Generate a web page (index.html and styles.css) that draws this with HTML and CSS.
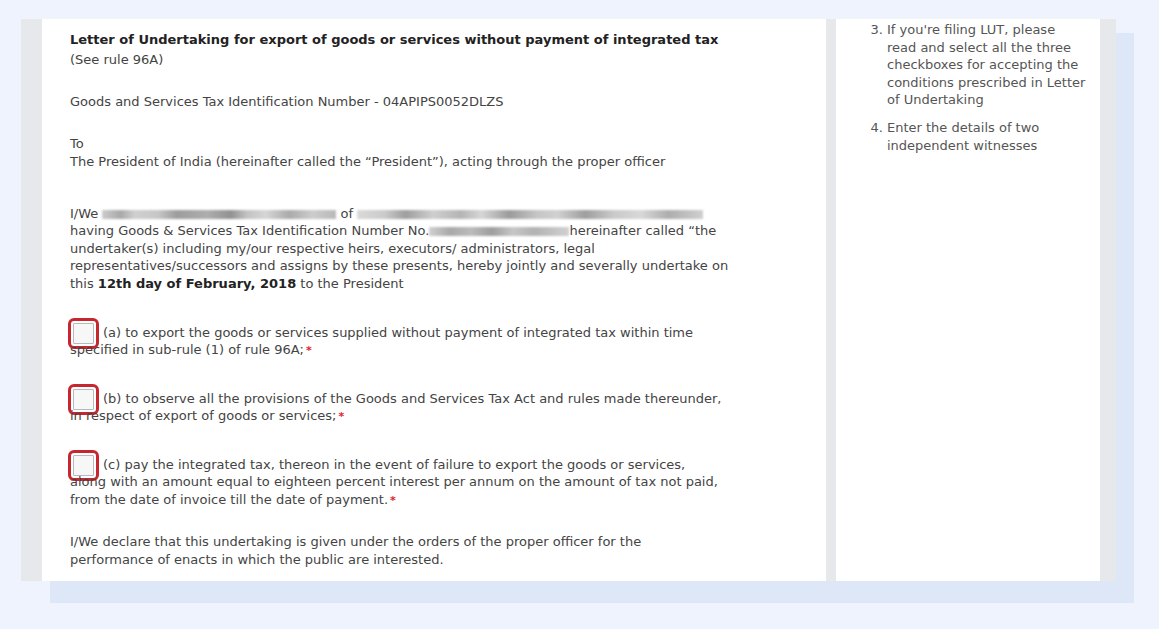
FILE: index.html
```html
<!DOCTYPE html>
<html lang="en">
<head>
<meta charset="utf-8">
<title>Letter of Undertaking</title>
<link rel="stylesheet" href="styles.css">
</head>
<body>
<div class="stage">
  <div class="frame">
    <div class="doc">
      <p class="title">Letter of Undertaking for export of goods or services without payment of integrated tax</p>
      <p>(See rule 96A)</p>
      <p class="gap-s">Goods and Services Tax Identification Number - 04APIPS0052DLZS</p>
      <p class="gap-s">To<br>The President of India (hereinafter called the &#8220;President&#8221;), acting through the proper officer</p>
      <p class="gap-l">I/We <span class="redact r1"></span> of <span class="redact r2"></span><br>having Goods &amp; Services Tax Identification Number No.<span class="redact r3"></span>hereinafter called &#8220;the<br>undertaker(s) including my/our respective heirs, executors/ administrators, legal<br>representatives/successors and assigns by these presents, hereby jointly and severally undertake on<br>this <b>12th day of February, 2018</b> to the President</p>
      <p class="gap-m"><span class="check"></span>(a) to export the goods or services supplied without payment of integrated tax within time<br>specified in sub-rule (1) of rule 96A;<span class="req">*</span></p>
      <p class="gap-n"><span class="check"></span>(b) to observe all the provisions of the Goods and Services Tax Act and rules made thereunder,<br>in respect of export of goods or services;<span class="req">*</span></p>
      <p class="gap-n"><span class="check"></span>(c) pay the integrated tax, thereon in the event of failure to export the goods or services,<br>along with an amount equal to eighteen percent interest per annum on the amount of tax not paid,<br>from the date of invoice till the date of payment.<span class="req">*</span></p>
      <p class="gap-e">I/We declare that this undertaking is given under the orders of the proper officer for the<br>performance of enacts in which the public are interested.</p>
    </div>
    <div class="side">
      <ol class="steps" start="3">
        <li>If you're filing LUT, please<br>read and select all the three<br>checkboxes for accepting the<br>conditions prescribed in Letter<br>of Undertaking</li>
        <li>Enter the details of two<br>independent witnesses</li>
      </ol>
    </div>
  </div>
</div>
</body>
</html>
```

FILE: styles.css
```css
html, body {
  margin: 0;
  padding: 0;
}
body {
  background: #eef3fd;
  width: 1159px;
  height: 629px;
  overflow: hidden;
  font-family: "DejaVu Sans", Verdana, sans-serif;
  font-size: 13px;
  line-height: 17.5px;
  color: #444;
}
.stage {
  position: relative;
  padding: 18px 0 0 21px;
}
.stage::before {
  content: "";
  position: absolute;
  left: 50px;
  top: 33px;
  width: 1084px;
  height: 570px;
  background: #dee7f7;
}
.frame {
  position: relative;
  display: flex;
  gap: 10px;
  width: 1095px;
  height: 563px;
  box-sizing: border-box;
  padding: 0 16px 0 21px;
  background: #e6e8eb;
  border-top: 1px solid #f2f4f7;
}
.doc {
  width: 784px;
  flex: none;
  background: #fff;
  box-sizing: border-box;
  padding: 12px 28px 0;
  white-space: nowrap;
}
.doc p {
  margin: 0;
}
.doc .title {
  font-weight: bold;
  color: #222;
  margin-bottom: 2.5px;
}
.doc b {
  color: #222;
}
.gap-s { margin-top: 24.5px !important; }
.gap-l { margin-top: 34.5px !important; }
.gap-m { margin-top: 31.5px !important; }
.gap-n { margin-top: 30px !important; }
.gap-e { margin-top: 24px !important; }
.gap-e { line-height: 18px; }

.redact {
  display: inline-block;
  height: 9px;
  vertical-align: -1px;
  filter: blur(1.2px);
  opacity: 0.85;
}
.r1 {
  width: 234px;
  background: linear-gradient(90deg, #c4c4c4 0, #9a9a9a 8%, #c8c8c8 14%, #bdbdbd 24%, #8c8c8c 32%, #a0a0a0 45%, #7f7f7f 55%, #b9b9b9 62%, #cfcfcf 70%, #9c9c9c 80%, #c4c4c4 90%, #adadad 100%);
}
.r2 {
  width: 346px;
  background: linear-gradient(90deg, #d4d4d4 0, #c2c2c2 8%, #8e8e8e 14%, #c7c7c7 22%, #a8a8a8 30%, #d0d0d0 36%, #8a8a8a 44%, #bcbcbc 52%, #c9c9c9 58%, #8e8e8e 66%, #c0c0c0 74%, #d2d2d2 82%, #a0a0a0 90%, #c8c8c8 100%);
}
.r3 {
  width: 140px;
  background: linear-gradient(90deg, #c8c8c8 0, #9a9a9a 15%, #b0b0b0 30%, #8d8d8d 45%, #bdbdbd 60%, #a5a5a5 75%, #cacaca 100%);
}

.check {
  display: inline-block;
  width: 21px;
  height: 21px;
  box-sizing: border-box;
  border: 1px solid #b9b9b9;
  background: #f7f7f7;
  border-radius: 1px;
  vertical-align: middle;
  margin: -5px 9px -5px 3px;
  outline: 3px solid #c8262f;
  outline-offset: 2px;
}
.req {
  color: #e0242c;
  font-weight: bold;
  font-size: 11px;
  margin-left: 2px;
}

.side {
  width: 264px;
  flex: none;
  background: #fff;
  color: #555;
  white-space: nowrap;
}
.steps {
  margin: 0;
  padding: 2px 0 0 51px;
}
.steps li + li {
  margin-top: 10.5px;
}
```
